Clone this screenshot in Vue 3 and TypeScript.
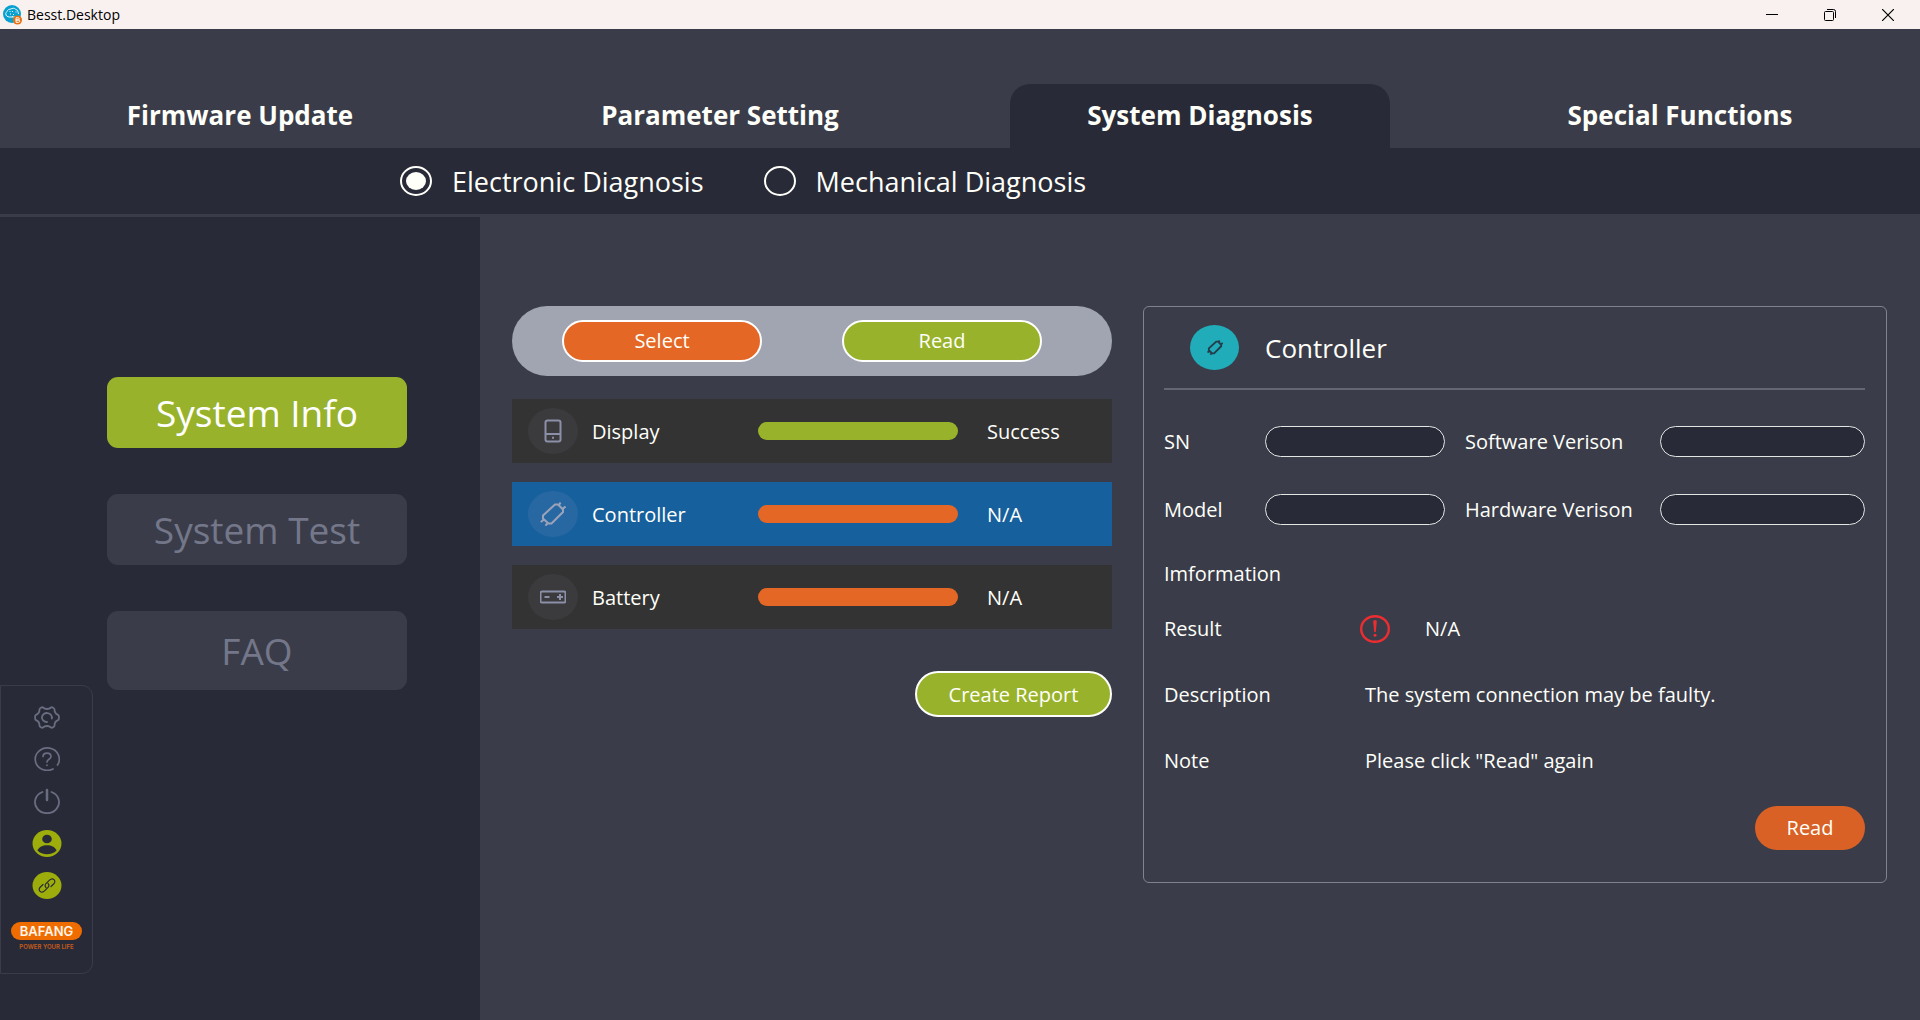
<script setup lang="ts">
import { ref } from 'vue'

type IconName = 'display' | 'controller' | 'battery'

interface Device {
  name: string
  icon: IconName
  status: string
  ok: boolean
}

const tabs: string[] = ['Firmware Update', 'Parameter Setting', 'System Diagnosis', 'Special Functions']
const activeTab = ref('System Diagnosis')

const modes: string[] = ['Electronic Diagnosis', 'Mechanical Diagnosis']
const mode = ref('Electronic Diagnosis')

const sections: string[] = ['System Info', 'System Test', 'FAQ']
const activeSection = ref('System Info')

const devices: Device[] = [
  { name: 'Display', icon: 'display', status: 'Success', ok: true },
  { name: 'Controller', icon: 'controller', status: 'N/A', ok: false },
  { name: 'Battery', icon: 'battery', status: 'N/A', ok: false },
]
const selected = ref('Controller')

const icons: Record<IconName, string> = {
  display: 'M7.5 1.5h11a2 2 0 0 1 2 2v17a2 2 0 0 1-2 2h-11a2 2 0 0 1-2-2v-17a2 2 0 0 1 2-2z M5.5 15h15 M12 18.7h2',
  controller:
    'M15 2.5h3l5 5V10L11.5 21.5h-3L3 16.5v-3z M18.5 4l2-3.5 M22 7.5l3.5-3 M4 17.5L.8 20 M7.8 21l-2.3 2.7',
  battery: 'M2 6.5h22a1.5 1.5 0 0 1 1.5 1.5v8a1.5 1.5 0 0 1-1.5 1.5H2A1.5 1.5 0 0 1 .5 16V8A1.5 1.5 0 0 1 2 6.5z M4.5 12h5 M17 12h6 M20 9v6',
}
</script>

<template>
  <div class="app">
    <header class="titlebar">
      <svg class="app-icon" width="20" height="20" viewBox="0 0 20 20" aria-hidden="true">
        <circle cx="9" cy="9" r="9" fill="#08a0cf" />
        <path d="M3 10c-1-2 1-3 1.500-4.500C6 3.500 8 4.500 9 3.500c2-.8 3 .5 4 1 2 .5 2 2.500 2.500 4.500M3 10c1 2 3 2 4 2h5" fill="none" stroke="#e8f8fd" stroke-width="1" />
        <path d="M7 9h1M9 6.500h1M10 9.500h1M12.500 7h1M6.500 6.500h1M9 11.500h1" stroke="#e8f8fd" stroke-width="1.200" />
        <circle cx="14.500" cy="15" r="4.500" fill="#ea6d0b" />
        <path d="M13 12.800h2.200a1 1 0 0 1 0 2.200H13zM13 15h2.600a1 1 0 0 1 0 2.300H13z" fill="none" stroke="#fff" stroke-width="1" />
      </svg>
      <span class="app-name">Besst.Desktop</span>
      <div class="window-buttons">
        <button type="button" aria-label="Minimize">
          <svg width="12" height="12" viewBox="0 0 12 12"><path d="M0 5.500h12" stroke="#000" fill="none" /></svg>
        </button>
        <button type="button" aria-label="Restore">
          <svg width="12" height="12" viewBox="0 0 12 12" fill="none" stroke="#000">
            <rect x=".5" y="2.500" width="9" height="9" rx="1" />
            <path d="M3 .5h6.500a2 2 0 0 1 2 2V9" />
          </svg>
        </button>
        <button type="button" aria-label="Close">
          <svg width="12" height="12" viewBox="0 0 12 12"><path d="M0 0l12 12M12 0L0 12" stroke="#000" stroke-width="1.200" fill="none" /></svg>
        </button>
      </div>
    </header>

    <nav class="tabs">
      <button
        v-for="tab in tabs"
        :key="tab"
        type="button"
        class="tab"
        :class="{ active: tab === activeTab }"
        @click="activeTab = tab"
      >{{ tab }}</button>
    </nav>

    <div class="modes" role="radiogroup" aria-label="Diagnosis type">
      <label v-for="item in modes" :key="item" class="mode">
        <input v-model="mode" type="radio" name="mode" :value="item" />
        <span>{{ item }}</span>
      </label>
    </div>

    <div class="body">
      <aside class="sidebar">
        <button
          v-for="section in sections"
          :key="section"
          type="button"
          class="section"
          :class="{ active: section === activeSection }"
          @click="activeSection = section"
        >{{ section }}</button>

        <div class="dock">
          <button type="button" aria-label="Settings">
            <svg width="26" height="23" viewBox="0 0 26 23" fill="none" stroke="#6a6d80" stroke-width="1.800" stroke-linecap="round">
              <path d="M9 1.500C11 3.500 15 3.500 17 1.500c1-.7 3.500.5 3.500 2C20.500 6.500 22 8 24 8.800c1.300.8 1.300 4.600 0 5.400-2 .8-3.500 2.300-3.500 5.300 0 1.500-2.500 2.700-3.500 2-2-2-6-2-8 0-1 .7-3.500-.5-3.500-2C5.500 16.500 4 15 2 14.200c-1.300-.8-1.300-4.600 0-5.400C4 8 5.500 6.500 5.500 3.500c0-1.500 2.500-2.700 3.500-2z" />
              <path d="M17.800 12.500A5 4.500 0 1 0 13 16" />
            </svg>
          </button>
          <button type="button" aria-label="Help">
            <svg width="26" height="24" viewBox="0 0 26 24" fill="none" stroke="#6a6d80" stroke-width="1.700" stroke-linecap="round">
              <path d="M19 22A12 11.200 0 1 1 23.500 18" />
              <path d="M9 9.500c0-4.500 8-4.500 8 0 0 2.800-4 2.700-4 5.500M13 18v.3" />
            </svg>
          </button>
          <button type="button" aria-label="Power">
            <svg width="26" height="26" viewBox="0 0 26 26" fill="none" stroke="#6a6d80" stroke-linecap="round">
              <path d="M8.500 4A12 11 0 1 0 17.500 4" stroke-width="1.800" />
              <path d="M13 2v10" stroke-width="2.500" />
            </svg>
          </button>
          <button type="button" aria-label="Account">
            <svg width="30" height="27" viewBox="0 0 30 27">
              <ellipse cx="15" cy="13.500" rx="14.500" ry="13.500" fill="#9cad0c" />
              <ellipse cx="15" cy="9" rx="4.800" ry="4.300" fill="#282b37" />
              <path d="M5.500 20.500C8 13.500 22 13.500 24.500 20.500C20 25.500 10 25.500 5.500 20.500z" fill="#282b37" />
            </svg>
          </button>
          <button type="button" aria-label="Connection">
            <svg width="30" height="27" viewBox="0 0 30 27">
              <ellipse cx="15" cy="13.500" rx="14.500" ry="13.500" fill="#9cad0c" />
              <g fill="none" stroke="#282b37" stroke-width="1.200" stroke-linecap="round" stroke-linejoin="round">
                <path d="M14 15.500c-1.500-1.300-1-3 .2-4.200l3.300-3.200c1.600-1.600 3.300-1.600 4.500-.4s1.200 2.800-.4 4.300L19 14.500" />
                <path d="M16 11.500c1.500 1.300 1 3-.2 4.200l-3.300 3.200c-1.600 1.600-3.300 1.600-4.500.4s-1.200-2.800.4-4.300L11 12.500" />
              </g>
            </svg>
          </button>
          <div class="brand">
            <span class="brand-name">BAFANG</span>
            <span class="brand-line">POWER YOUR LIFE</span>
          </div>
        </div>
      </aside>

      <main class="content">
        <section class="devices">
          <div class="actions">
            <button type="button" class="pill orange">Select</button>
            <button type="button" class="pill green">Read</button>
          </div>
          <ul class="device-list">
            <li v-for="device in devices" :key="device.name">
              <button
                type="button"
                class="device"
                :class="{ selected: device.name === selected }"
                @click="selected = device.name"
              >
                <span class="badge">
                  <svg width="26" height="24" viewBox="0 0 26 24" aria-hidden="true"><path :d="icons[device.icon]" /></svg>
                </span>
                <span class="device-name">{{ device.name }}</span>
                <span class="bar" :class="device.ok ? 'bar-ok' : 'bar-fail'"></span>
                <span class="device-status">{{ device.status }}</span>
              </button>
            </li>
          </ul>
          <button type="button" class="pill green report">Create Report</button>
        </section>

        <section class="detail">
          <div class="detail-head">
            <span class="detail-icon">
              <svg width="16" height="15" viewBox="0 0 26 24" aria-hidden="true"><path :d="icons.controller" /></svg>
            </span>
            <h2>{{ selected }}</h2>
          </div>
          <div class="fields">
            <label for="sn">SN</label>
            <input id="sn" type="text" />
            <label for="software">Software Verison</label>
            <input id="software" type="text" />
            <label for="model">Model</label>
            <input id="model" type="text" />
            <label for="hardware">Hardware Verison</label>
            <input id="hardware" type="text" />
          </div>
          <h3>Imformation</h3>
          <dl class="info">
            <dt>Result</dt>
            <dd class="result">
              <svg width="30" height="28" viewBox="0 0 30 28" aria-hidden="true">
                <ellipse cx="15" cy="14" rx="13.800" ry="12.800" fill="none" stroke="#ee2d30" stroke-width="2.400" />
                <path d="M13.200 6.500a1.800 1.500 0 0 1 3.600 0L15.800 17h-1.600z" fill="#ee2d30" />
                <circle cx="15" cy="20.300" r="1.500" fill="#ee2d30" />
              </svg>
              <span>N/A</span>
            </dd>
            <dt>Description</dt>
            <dd>The system connection may be faulty.</dd>
            <dt>Note</dt>
            <dd>Please click "Read" again</dd>
          </dl>
          <button type="button" class="detail-read">Read</button>
        </section>
      </main>
    </div>
  </div>
</template>

<style>
body {
  margin: 0;
  background: #3a3d49;
}
</style>

<style scoped>
.app {
  --dark: #282b37;
  --mid: #3a3d49;
  --green: #98b32b;
  --orange: #e56725;
  --text: #fffffa;
  display: flex;
  flex-direction: column;
  min-height: 100vh;
  background: var(--mid);
  color: var(--text);
  font-family: "Open Sans", "Segoe UI", sans-serif;
  font-size: 20px;
  font-weight: 500;
  line-height: 28px;
}

.app *,
.app {
  box-sizing: border-box;
}

button {
  padding: 0;
  border: 0;
  background: none;
  color: inherit;
  font: inherit;
  cursor: pointer;
}

svg {
  display: block;
}

.titlebar {
  display: flex;
  align-items: center;
  height: 29px;
  padding-left: 3px;
  background: #f9f1ef;
  color: #000;
  font-size: 14px;
  font-weight: 400;
}

.app-name {
  margin-left: 4px;
}

.window-buttons {
  display: flex;
  margin-left: auto;
  margin-right: 3px;
}

.window-buttons button {
  display: grid;
  place-items: center;
  width: 58px;
  height: 29px;
}

.tabs {
  display: grid;
  grid-template-columns: repeat(4, 1fr);
  padding-top: 55px;
}

.tab {
  height: 64px;
  margin: 0 50px;
  padding-bottom: 2px;
  border-radius: 20px 20px 0 0;
  font-size: 26px;
  font-weight: 700;
}

.tab.active {
  background: var(--dark);
}

.modes {
  display: flex;
  align-items: center;
  gap: 60px;
  height: 66px;
  padding-left: 400px;
  background: var(--dark);
  font-size: 27px;
  font-weight: 400;
}

.mode {
  display: flex;
  align-items: center;
  gap: 20px;
}

.mode span {
  padding-top: 2px;
}

.mode input {
  display: grid;
  place-items: center;
  width: 32px;
  height: 30px;
  margin: 0;
  border: 2px solid var(--text);
  border-radius: 50%;
  appearance: none;
}

.mode input:checked::before {
  content: "";
  width: 20px;
  height: 18px;
  border-radius: 50%;
  background: var(--text);
}

.body {
  display: grid;
  grid-template-columns: 1fr 3fr;
  flex: 1;
  margin-top: 3px;
}

.sidebar {
  position: relative;
  display: flex;
  flex-direction: column;
  gap: 46px;
  padding: 160px 73px 40px 107px;
  background: var(--dark);
}

.section {
  height: 71px;
  border-radius: 11px;
  background: var(--mid);
  color: #74778a;
  font-size: 37px;
  font-weight: 400;
}

.section:nth-child(3) {
  height: 79px;
}

.section.active {
  background: var(--green);
  color: #fff;
}

.dock {
  position: absolute;
  left: 0;
  bottom: 46px;
  display: flex;
  flex-direction: column;
  align-items: center;
  width: 93px;
  height: 289px;
  padding-top: 10px;
  border: 1px solid var(--mid);
  border-radius: 0 11px 11px 0;
}

.dock button {
  display: grid;
  place-items: center;
  width: 42px;
  height: 42px;
}

.brand {
  display: flex;
  flex-direction: column;
  align-items: center;
  margin-top: 16px;
}

.brand-name {
  width: 71px;
  border-radius: 9px;
  background: #ef6c00;
  color: #fff5e8;
  font-family: Inter, sans-serif;
  font-size: 13px;
  font-weight: 600;
  line-height: 18px;
  text-align: center;
}

.brand-line {
  margin-top: 3px;
  color: #c85c1a;
  font-family: Inter, sans-serif;
  font-size: 6px;
  font-weight: 600;
  line-height: 8px;
  white-space: nowrap;
}

.content {
  display: grid;
  grid-template-columns: 600fr 744fr;
  align-items: start;
  gap: 31px;
  padding: 89px 33px 40px 32px;
}

.devices {
  display: flex;
  flex-direction: column;
}

.actions {
  display: flex;
  align-items: center;
  justify-content: space-between;
  height: 70px;
  padding: 0 70px 0 50px;
  border-radius: 35px;
  background: #a1a5b1;
}

.pill {
  width: 200px;
  height: 42px;
  border: 2px solid #fff;
  border-radius: 23px;
}

.orange {
  background: var(--orange);
}

.green {
  background: var(--green);
}

.report {
  align-self: flex-end;
  width: 197px;
  height: 46px;
  margin-top: 42px;
  padding-top: 1px;
}

.device-list {
  display: flex;
  flex-direction: column;
  gap: 19px;
  margin: 23px 0 0;
  padding: 0;
  list-style: none;
}

.device {
  display: grid;
  grid-template-columns: 50px 152px 200px 1fr;
  align-items: center;
  width: 100%;
  height: 64px;
  padding-left: 16px;
  background: #333;
  text-align: left;
}

.badge {
  display: grid;
  place-items: center;
  width: 50px;
  height: 46px;
  border-radius: 50%;
  background: #3b3b3e;
}

.badge svg {
  fill: none;
  stroke: #8b8fa8;
  stroke-width: 2px;
}

.selected {
  background: #17609e;
}

.selected .badge {
  background: #2868a2;
}

.selected .badge svg {
  stroke: #9ba3bb;
}

.device-name {
  padding: 2px 0 0 14px;
}

.bar {
  margin-left: 28px;
  width: 200px;
  height: 18px;
  border-radius: 9px;
}

.bar-ok {
  background: var(--green);
}

.bar-fail {
  background: var(--orange);
}

.device-status {
  padding: 2px 0 0 57px;
}

.detail {
  display: flex;
  flex-direction: column;
  padding: 18px 21px 32px 20px;
  border: 1px solid #80838d;
  border-radius: 6px;
}

.detail-head {
  display: flex;
  align-items: center;
  gap: 26px;
  height: 65px;
  padding: 0 0 18px 26px;
  border-bottom: 2px solid #646773;
}

.detail-icon {
  display: grid;
  place-items: center;
  width: 49px;
  height: 45px;
  border-radius: 50%;
  background: #21acb9;
}

.detail-icon svg {
  fill: none;
  stroke: #233d4b;
  stroke-width: 3px;
}

h2,
h3 {
  margin: 0;
  font-size: 20px;
  font-weight: 500;
}

h2 {
  font-size: 26px;
}

.fields {
  display: grid;
  grid-template-columns: 101px 180fr 215px 205fr;
  align-items: center;
  row-gap: 37px;
  margin-top: 36px;
}

.fields label:nth-of-type(even) {
  padding-left: 20px;
}

.fields input {
  min-width: 0;
  height: 31px;
  padding: 0 14px;
  border: 1px solid #e4e6e4;
  border-radius: 16px;
  background: var(--dark);
  color: inherit;
  font: inherit;
}

h3 {
  margin-top: 35px;
}

.info {
  display: grid;
  grid-template-columns: 201px 1fr;
  row-gap: 38px;
  margin: 27px 0 0;
}

.info dd {
  margin: 0;
}

.result {
  display: flex;
  align-items: center;
  gap: 35px;
}

.result svg {
  margin-left: -5px;
}

.detail-read {
  align-self: flex-end;
  width: 110px;
  height: 44px;
  margin-top: 31px;
  border-radius: 22px;
  background: #d96125;
}
</style>
